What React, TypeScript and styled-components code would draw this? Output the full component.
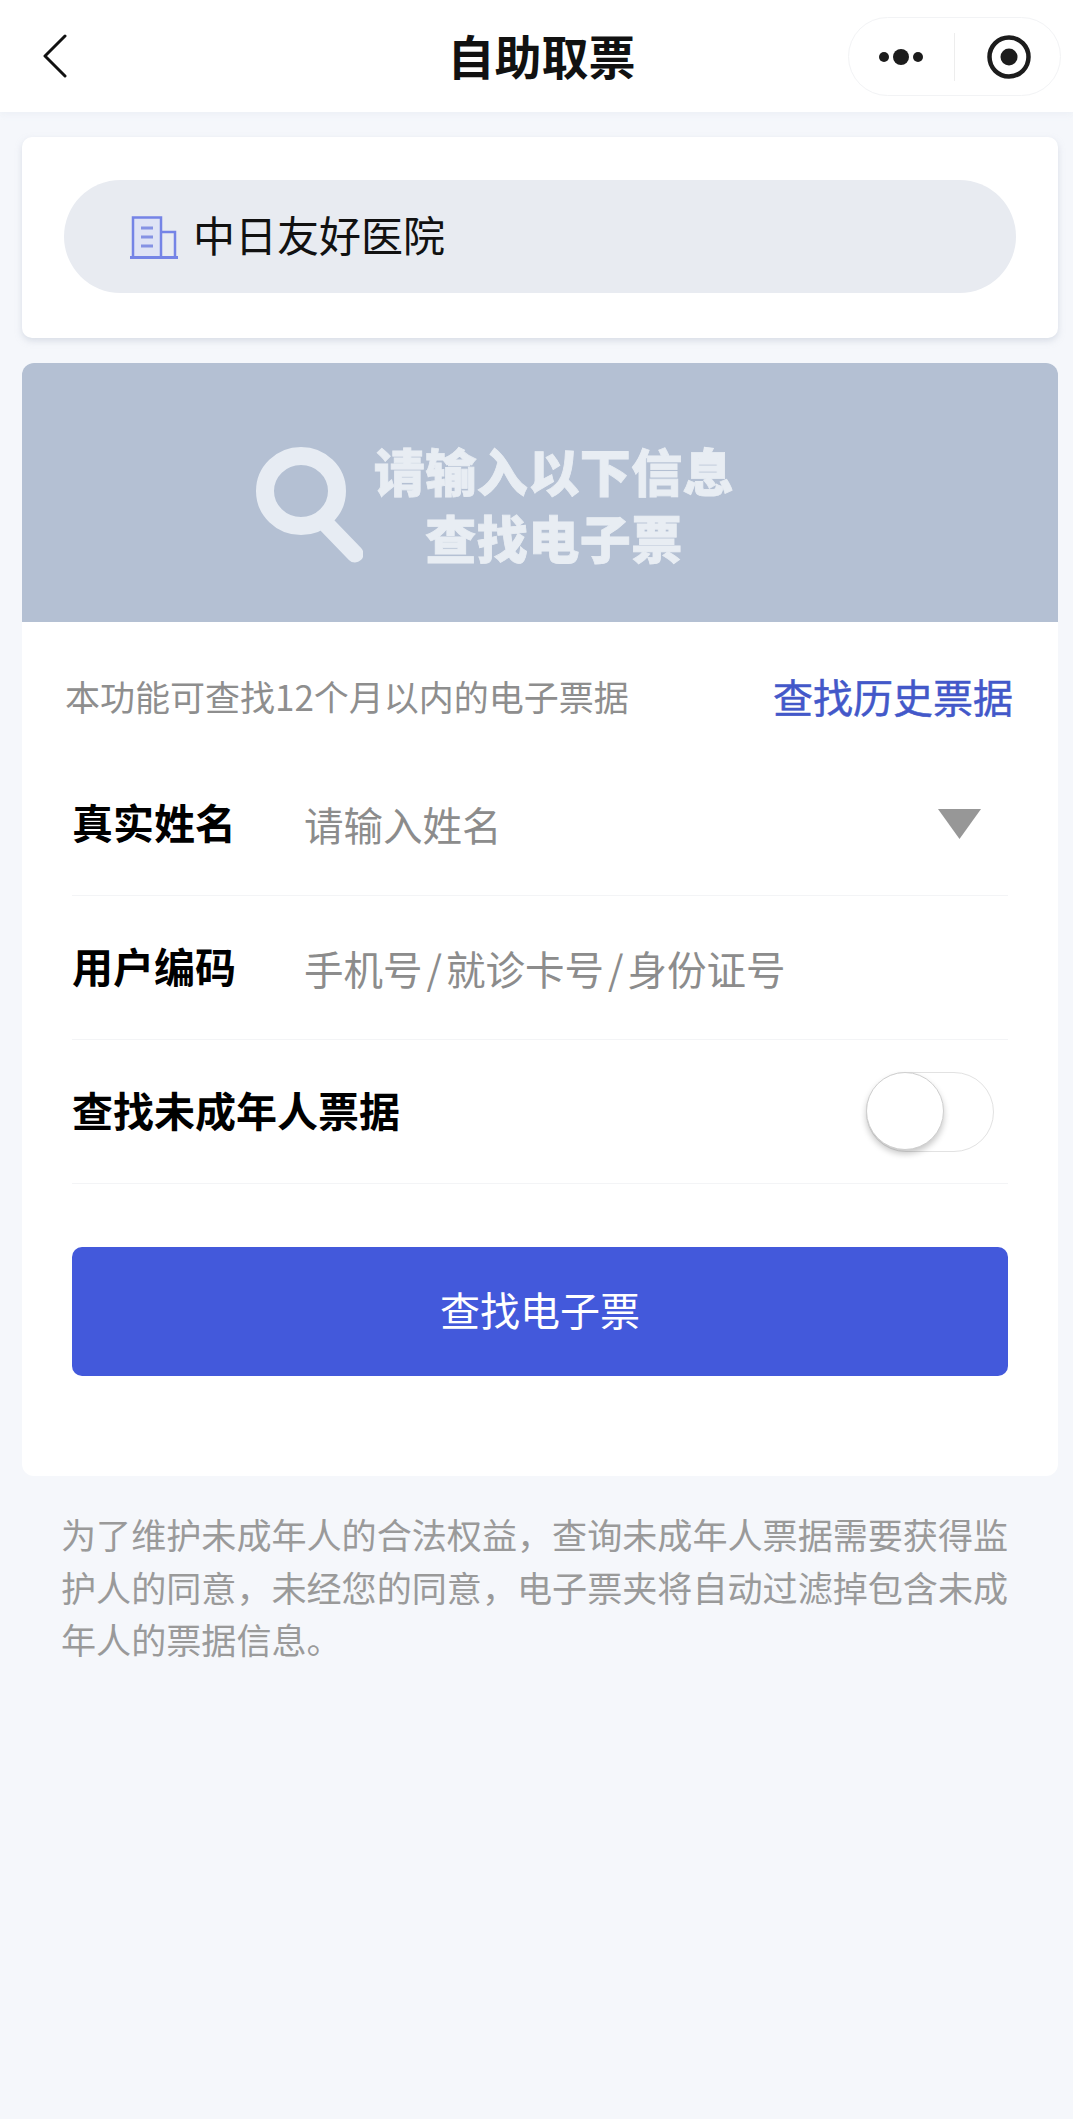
import React from "react";
import styled, { createGlobalStyle } from "styled-components";

const Global = createGlobalStyle`
  html, body { margin: 0; padding: 0; background: #f5f7fb; }
  body { font-family: "Noto Sans CJK SC", "Liberation Sans", sans-serif; }
  * { box-sizing: border-box; }
`;

const Page = styled.div`
  width: 1073px;
  min-height: 2119px;
  background: #f5f7fb;
`;

const NavBar = styled.header`
  height: 112px;
  background: #fff;
  display: grid;
  grid-template-columns: 1fr auto 1fr;
  align-items: center;
  padding: 0 12px 0 22px;
  box-shadow: 0 2px 6px rgba(225, 230, 240, 0.45);
`;

const BackButton = styled.button`
  border: 0;
  background: none;
  padding: 0;
  margin-left: 20px;
  width: 26px;
  height: 44px;
  justify-self: start;
  display: flex;
`;

const Title = styled.h1`
  margin: 0 0 3px;
  font-size: 47px;
  line-height: 60px;
  font-weight: 700;
  color: #111;
`;

const Capsule = styled.div`
  justify-self: end;
  width: 213px;
  height: 79px;
  margin-top: 1px;
  border: 1px solid #f2f3f5;
  border-radius: 40px;
  background: #fff;
  display: flex;
  align-items: center;
  padding-left: 29px;
`;

const CapsuleDivider = styled.span`
  width: 1px;
  height: 48px;
  background: #ededed;
  margin: 0 32px 0 30px;
`;

const Main = styled.main`
  padding: 25px 15px 0 22px;
`;

const HospitalCard = styled.section`
  height: 201px;
  background: #fff;
  border-radius: 10px;
  padding: 43px 42px 0;
  margin-bottom: 25px;
  box-shadow: 0 3px 6px rgba(190, 198, 212, 0.5);
`;

const HospitalPill = styled.div`
  height: 113px;
  border-radius: 57px;
  background: #e8ebf1;
  display: flex;
  align-items: center;
  padding-left: 66px;
`;

const HospitalName = styled.span`
  margin: 0 0 5px 15px;
  font-size: 42px;
  line-height: 56px;
  color: #111;
`;

const FormCard = styled.section`
  background: #fff;
  border-radius: 12px;
  overflow: hidden;
  padding-bottom: 100px;
`;

const Banner = styled.div`
  height: 259px;
  background: #b4c0d3;
  display: flex;
  align-items: center;
  padding: 24px 0 0 233px;
`;

const BannerText = styled.div`
  margin: 0 0 2px 9px;
  width: 364px;
  text-align: center;
  font-size: 51px;
  letter-spacing: 0.5px;
  line-height: 67px;
  font-weight: 900;
  color: #e8edf3;
  -webkit-text-stroke: 0.8px #e8edf3;
`;

const InfoRow = styled.div`
  display: flex;
  justify-content: space-between;
  align-items: center;
  padding: 52px 45px 34px 43px;
`;

const InfoText = styled.span`
  font-size: 35px;
  line-height: 44px;
  color: #8e8e8e;
`;

const HistoryLink = styled.a`
  font-size: 40px;
  line-height: 44px;
  color: #4358c9;
  -webkit-text-stroke: 0.5px #4358c9;
`;

const Form = styled.div`
  padding: 0 50px;
`;

const Row = styled.div`
  height: 144px;
  display: flex;
  align-items: center;
  border-bottom: 1px solid #f3f4f6;
`;

const Label = styled.span<{ $wide?: boolean }>`
  width: ${(p) => (p.$wide ? "auto" : "232px")};
  flex: ${(p) => (p.$wide ? "1" : "none")};
  padding-bottom: 5px;
  font-size: 41px;
  line-height: 52px;
  font-weight: 700;
  color: #000;
`;

const Placeholder = styled.span`
  flex: 1;
  font-size: 39.5px;
  line-height: 52px;
  color: #8c8c8c;
`;

const Slash = styled.span`
  margin: 0 4px;
`;

const Caret = styled.svg`
  margin-right: 27px;
  width: 43px;
  height: 30px;
`;

const Toggle = styled.div`
  position: relative;
  width: 128px;
  height: 80px;
  margin-right: 14px;
  border: 1px solid #e2e2e2;
  border-radius: 40px;
  background: #fff;
`;

const ToggleThumb = styled.span`
  position: absolute;
  left: -1px;
  top: -1px;
  width: 78px;
  height: 78px;
  border-radius: 50%;
  background: #fff;
  border: 1px solid #cfcfcf;
  box-shadow: 0 4px 6px rgba(0, 0, 0, 0.22);
`;

const SubmitButton = styled.button`
  display: block;
  width: 936px;
  height: 129px;
  margin-top: 63px;
  padding: 0 0 6px;
  border: 0;
  border-radius: 10px;
  background: #4359db;
  color: #fff;
  font-family: inherit;
  font-size: 40px;
  line-height: 52px;
`;

const Note = styled.p`
  margin: 0;
  padding: 32px 0 0 39px;
  width: 992px;
  font-size: 35.1px;
  line-height: 52.7px;
  color: #9a9a9a;
`;

const BackIcon = () => (
  <svg width="26" height="44" viewBox="0 0 26 44" fill="none">
    <path d="M23 2 L3 22 L23 42" stroke="#111" strokeWidth="3" strokeLinecap="round" strokeLinejoin="round" />
  </svg>
);

const DotsIcon = () => (
  <svg width="46" height="20" viewBox="0 0 46 20" fill="#1c1c1c">
    <circle cx="6" cy="10" r="5" />
    <circle cx="23" cy="10" r="8" />
    <circle cx="40" cy="10" r="5" />
  </svg>
);

const TargetIcon = () => (
  <svg width="44" height="44" viewBox="0 0 44 44" fill="none">
    <circle cx="22" cy="22" r="19.5" stroke="#1c1c1c" strokeWidth="4.5" />
    <circle cx="22" cy="22" r="8.5" fill="#1c1c1c" />
  </svg>
);

const BuildingIcon = () => (
  <svg width="48" height="44" viewBox="0 0 48 44" fill="none" stroke="#7584e6" strokeWidth="2.5">
    <path d="M3 42 V2.5 H31 V42" fill="#dfe3f5" />
    <path d="M31 17 H45 V42" />
    <path d="M0 42.5 H48" strokeWidth="3" />
    <path d="M11 13 H23 M11 22 H23 M11 31 H23" strokeWidth="3" stroke="#8592e4" />
  </svg>
);

const SearchIcon = () => (
  <svg width="108" height="116" viewBox="0 0 108 116" fill="none" stroke="#e7ecf3">
    <ellipse cx="46" cy="44" rx="36" ry="35" strokeWidth="18" />
    <path d="M72 78 L100 107" strokeWidth="17" strokeLinecap="round" />
  </svg>
);

export default function App() {
  return (
    <Page>
      <Global />
      <NavBar>
        <BackButton aria-label="返回">
          <BackIcon />
        </BackButton>
        <Title>自助取票</Title>
        <Capsule>
          <DotsIcon />
          <CapsuleDivider />
          <TargetIcon />
        </Capsule>
      </NavBar>
      <Main>
        <HospitalCard>
          <HospitalPill>
            <BuildingIcon />
            <HospitalName>中日友好医院</HospitalName>
          </HospitalPill>
        </HospitalCard>
        <FormCard>
          <Banner>
            <SearchIcon />
            <BannerText>
              请输入以下信息
              <br />
              查找电子票
            </BannerText>
          </Banner>
          <InfoRow>
            <InfoText>本功能可查找12个月以内的电子票据</InfoText>
            <HistoryLink>查找历史票据</HistoryLink>
          </InfoRow>
          <Form>
            <Row>
              <Label>真实姓名</Label>
              <Placeholder>请输入姓名</Placeholder>
              <Caret viewBox="0 0 43 30">
                <path d="M0 0 H43 L21.5 30 Z" fill="#979797" />
              </Caret>
            </Row>
            <Row>
              <Label>用户编码</Label>
              <Placeholder>
                手机号<Slash>/</Slash>就诊卡号<Slash>/</Slash>身份证号
              </Placeholder>
            </Row>
            <Row>
              <Label $wide>查找未成年人票据</Label>
              <Toggle>
                <ToggleThumb />
              </Toggle>
            </Row>
            <SubmitButton>查找电子票</SubmitButton>
          </Form>
        </FormCard>
        <Note>
          为了维护未成年人的合法权益，查询未成年人票据需要获得监护人的同意，未经您的同意，电子票夹将自动过滤掉包含未成年人的票据信息。
        </Note>
      </Main>
    </Page>
  );
}
